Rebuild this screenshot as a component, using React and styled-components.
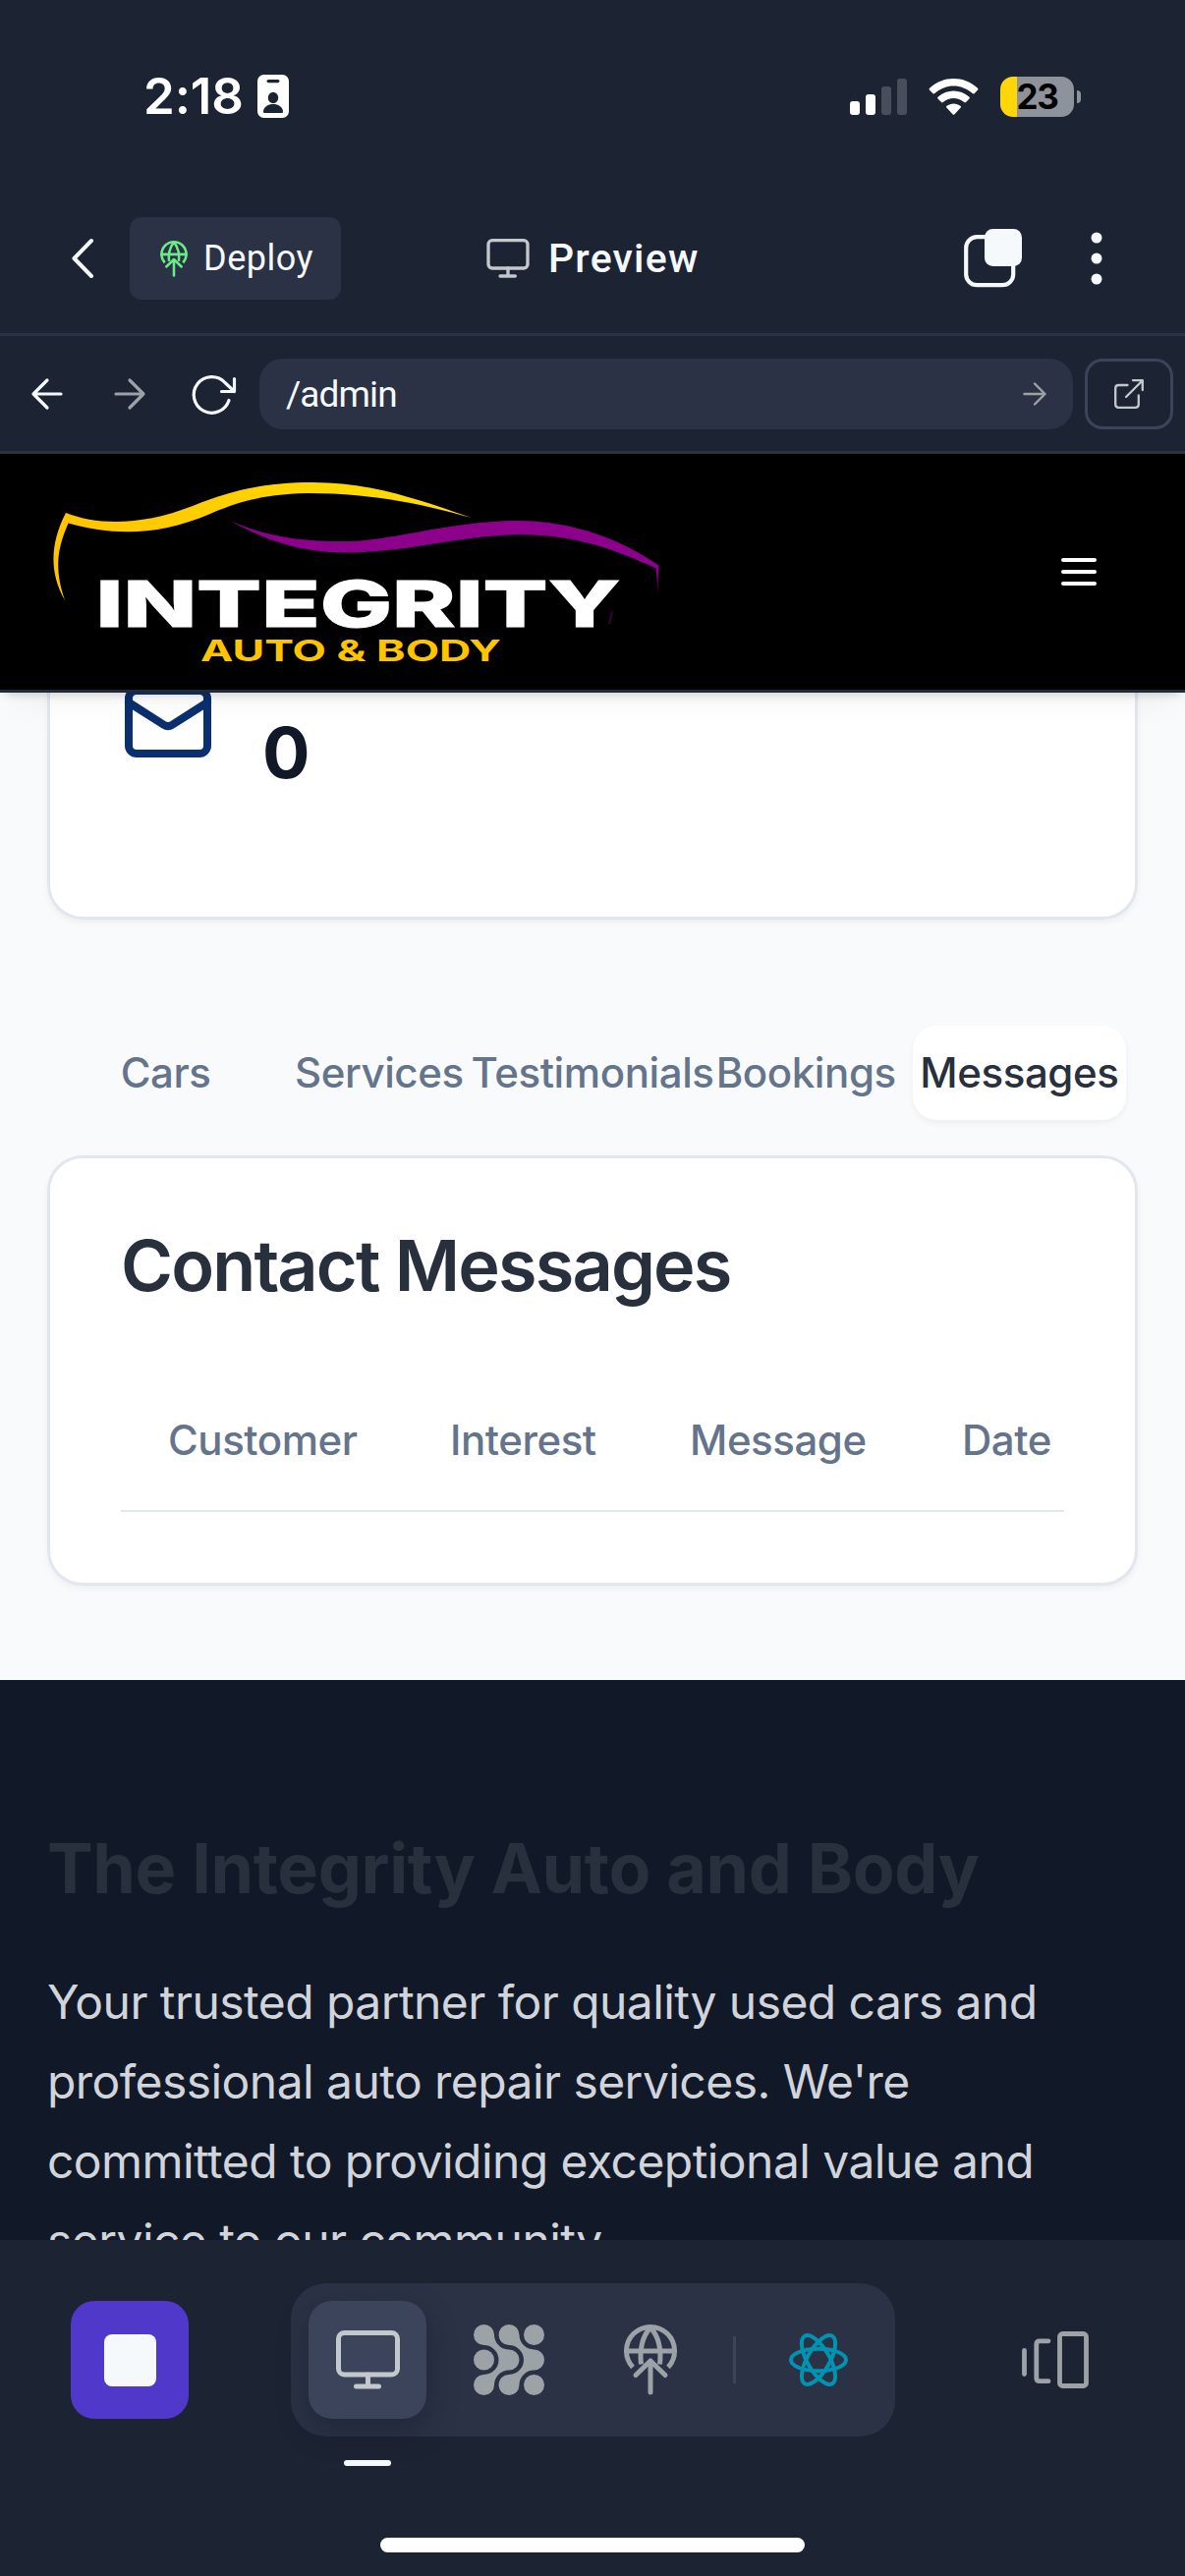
import React from "react";
import styled, { createGlobalStyle } from "styled-components";

const GlobalStyle = createGlobalStyle`
  *, *::before, *::after { box-sizing: border-box; }
  body { margin: 0; background: #1c2333; }
  button { border: 0; padding: 0; background: none; color: inherit; font: inherit; }
  h2, p { margin: 0; }
  svg { display: block; flex: none; overflow: visible; }
`;

const ui = `Inter, "Liberation Sans", sans-serif`;

const Screen = styled.div`
  width: 1206px;
  height: 2622px;
  display: flex;
  flex-direction: column;
  overflow: hidden;
  background: #1c2333;
  color: #f5f9fc;
  font-family: ${ui};
`;

/* Status bar */
const StatusBar = styled.div`
  height: 184px;
  padding: 12px 106px 0 146px;
  display: flex;
  align-items: center;
  color: #fff;
`;
const Clock = styled.span`
  width: 116px;
  font-size: 51px;
  font-weight: 600;
  line-height: 60px;
  letter-spacing: -0.1px;
  white-space: nowrap;
`;
const StatusIcons = styled.div`
  margin-left: auto;
  display: flex;
  align-items: center;
  gap: 22px;
`;
const Battery = styled.div`
  display: flex;
  align-items: center;
  gap: 3px;
`;
const BatteryBody = styled.div`
  width: 75px;
  height: 41px;
  border-radius: 13px;
  display: flex;
  align-items: center;
  justify-content: center;
  background: linear-gradient(90deg, #ffd60a 0 17px, #8e929b 17px);
  color: #000;
  font-size: 35px;
  font-weight: 700;
  letter-spacing: -1.4px;
`;
const BatteryNub = styled.i`
  width: 4px;
  height: 13px;
  border-radius: 0 4px 4px 0;
  background: #8e929b;
`;

/* App header */
const TopBar = styled.header`
  height: 158px;
  padding: 3px 84px 0 73px;
  display: grid;
  grid-template-columns: 59px 363px 1fr auto auto;
  align-items: center;
  border-bottom: 3px solid #2b3245;
`;
const DeployButton = styled.button`
  width: 215px;
  height: 84px;
  padding-left: 31px;
  border-radius: 12px;
  display: flex;
  align-items: center;
  gap: 16px;
  background: #2b3245;
  font-family: Roboto, "Noto Sans", sans-serif;
  font-size: 36px;
  letter-spacing: 0.5px;
`;
const TabTitle = styled.div`
  display: flex;
  align-items: center;
  gap: 19px;
  font-family: Roboto, "Noto Sans", sans-serif;
  font-size: 41px;
  font-weight: 500;
  letter-spacing: 1.2px;
`;
const IconButton = styled.button`
  display: flex;
  align-items: center;
  justify-content: center;
  width: ${(p) => p.$w || 60}px;
  margin-left: ${(p) => p.$ml || 0}px;
`;

/* Address bar */
const AddressBar = styled.div`
  height: 120px;
  padding: 1px 12px 0 32px;
  display: flex;
  align-items: center;
  border-bottom: 3px solid #2b3245;
`;
const NavButtons = styled.div`
  width: 232px;
  display: flex;
  align-items: center;
`;
const NavButton = styled(IconButton)`
  width: auto;
  margin-right: ${(p) => p.$mr || 0}px;
`;
const UrlField = styled.div`
  flex: 1;
  height: 72px;
  padding: 0 27px;
  border-radius: 24px;
  display: flex;
  align-items: center;
  justify-content: space-between;
  background: #2b3245;
  font-family: Roboto, "Noto Sans", sans-serif;
  font-size: 37px;
  letter-spacing: -0.9px;
`;
const OpenButton = styled.button`
  width: 90px;
  height: 72px;
  margin-left: 12px;
  border: 3px solid #3c445c;
  border-radius: 18px;
  display: flex;
  align-items: center;
  justify-content: center;
`;

/* Previewed website */
const Viewport = styled.main`
  height: 1818px;
  overflow: hidden;
  background: #f9fafc;
  color: #29303d;
`;
const SiteHeader = styled.header`
  position: relative;
  z-index: 1;
  height: 243px;
  padding: 24px 90px 24px 50px;
  display: flex;
  align-items: center;
  justify-content: space-between;
  background: #000;
  border-bottom: 3px solid #1f2937;
  box-shadow: 0 24px 30px -12px rgba(0, 0, 0, 0.04), 0 6px 10px -5px rgba(0, 0, 0, 0.2);
`;
const Content = styled.div`
  height: 1005px;
  padding: 0 48px;
`;
const Card = styled.section`
  background: #fff;
  border: 3px solid #e2e6ef;
  border-radius: 36px;
  box-shadow: 0 3px 6px rgba(0, 0, 0, 0.05);
`;
const StatCard = styled(Card)`
  height: 231px;
  padding: 0 72px;
  display: flex;
  align-items: flex-start;
  gap: 48px;
  border-top: 0;
  border-top-left-radius: 0;
  border-top-right-radius: 0;
`;
const MailIcon = styled.svg`
  margin-top: -18px;
`;
const StatValue = styled.strong`
  margin-top: 13px;
  font-size: 72px;
  font-weight: 700;
  line-height: 96px;
  color: #111827;
`;
const Tabs = styled.nav`
  margin-top: 96px;
  padding: 12px;
  height: 120px;
  display: grid;
  grid-template-columns: repeat(5, 1fr);
`;
const Tab = styled.button`
  min-width: 0;
  padding-bottom: 2px;
  border-radius: 24px;
  display: flex;
  align-items: center;
  justify-content: center;
  white-space: nowrap;
  font-size: 42px;
  font-weight: 500;
  letter-spacing: -0.4px;
  color: ${(p) => (p.$active ? "#29303d" : "#64748b")};
  background: ${(p) => (p.$active ? "#fff" : "transparent")};
  box-shadow: ${(p) => (p.$active ? "0 3px 6px rgba(0,0,0,.05)" : "none")};
`;
const MessagesCard = styled(Card)`
  height: 438px;
  margin-top: 24px;
  padding: 67px 72px 0;
`;
const CardTitle = styled.h2`
  font-size: 72px;
  line-height: 84px;
  font-weight: 600;
  letter-spacing: -1.85px;
`;
const TableHead = styled.div`
  margin-top: 66px;
  height: 143px;
  display: grid;
  grid-template-columns: 287px 244px 277px 1fr;
  align-items: center;
  padding: 0 0 2px 48px;
  border-bottom: 2px solid #e2e6ef;
  font-size: 42px;
  font-weight: 500;
  letter-spacing: -0.45px;
  color: #64748b;
`;
const SiteFooter = styled.footer`
  height: 570px;
  padding: 144px 48px 0;
  background: #111827;
`;
const FooterTitle = styled.h2`
  font-size: 70px;
  line-height: 96px;
  font-weight: 700;
  letter-spacing: -0.35px;
  color: #29303d;
  white-space: nowrap;
`;
const FooterText = styled.p`
  margin-top: 47px;
  font-size: 48px;
  line-height: 81px;
  letter-spacing: -0.56px;
  color: #d1d5db;
  white-space: nowrap;
`;

/* Bottom dock */
const Dock = styled.footer`
  height: 342px;
  display: flex;
  flex-direction: column;
  align-items: center;
  background: #1c2333;
`;
const DockRow = styled.div`
  width: 100%;
  height: 200px;
  padding: 44px 98px 0 72px;
  display: flex;
  align-items: center;
`;
const StopButton = styled.button`
  width: 120px;
  height: 120px;
  border-radius: 24px;
  display: flex;
  align-items: center;
  justify-content: center;
  background: #5039ca;
`;
const StopGlyph = styled.i`
  width: 53px;
  height: 53px;
  border-radius: 8px;
  background: #f5f9fc;
`;
const ToolGroup = styled.div`
  height: 156px;
  width: 615px;
  margin-left: 104px;
  padding: 0 18px;
  border-radius: 36px;
  display: flex;
  align-items: center;
  gap: 24px;
  background: #2b3245;
`;
const ToolButton = styled.button`
  width: 120px;
  height: 120px;
  border-radius: 24px;
  display: flex;
  align-items: center;
  justify-content: center;
  color: #9da2a6;
  background: ${(p) => (p.$active ? "#3c445c" : "transparent")};
  box-shadow: ${(p) => (p.$active ? "0 12px 30px rgba(14,21,37,.35)" : "none")};
`;
const Divider = styled.i`
  width: 3px;
  height: 48px;
  background: #3c445c;
`;
const Indicator = styled.i`
  align-self: flex-start;
  width: 48px;
  height: 6px;
  margin: 24px 0 0 350px;
  border-radius: 3px;
  background: #f5f9fc;
`;
const HomeBar = styled.i`
  width: 432px;
  height: 15px;
  margin-top: 73px;
  border-radius: 8px;
  background: #fff;
`;

const line = { fill: "none", strokeLinecap: "round", strokeLinejoin: "round" };

const BadgeIcon = () => (
  <svg width="32" height="44" viewBox="0 0 32 44">
    <rect width="32" height="44" rx="6.5" fill="#fff" />
    <rect x="9.5" y="5" width="13" height="3.2" rx="1.6" fill="#1c2333" />
    <ellipse cx="16" cy="23.5" rx="5.2" ry="5.8" fill="#1c2333" />
    <path d="M6 37.5C6.500 27.500 25.500 27.500 26 37.500C26 38.700 25.500 39 24.500 39H7.500C6.500 39 6 38.700 6 37.500Z" fill="#1c2333" />
  </svg>
);

const SignalIcon = () => (
  <svg width="58" height="37" viewBox="0 0 58 37">
    <rect y="23" width="10" height="14" rx="3" fill="#fff" />
    <rect x="16" y="16" width="10" height="21" rx="3" fill="#fff" />
    <rect x="32" y="8" width="10" height="29" rx="3" fill="#494e5c" />
    <rect x="48" width="10" height="37" rx="3" fill="#494e5c" />
  </svg>
);

const WifiIcon = () => (
  <svg width="51" height="37" viewBox="0 0 51 37" fill="#fff">
    <path d="M1 9.700C15-3.200 36-3.200 50 9.700Q51 10.700 50 11.700L46.500 15.200Q45.700 16 44.700 15.100C33 4.900 18 4.900 6.300 15.100Q5.300 16 4.500 15.200L1 11.700Q0 10.700 1 9.700Z" />
    <path d="M9.500 18.700C19 10.300 32 10.300 41.500 18.700Q42.400 19.600 41.500 20.500L38 24Q37.200 24.800 36.200 24C29.500 18.500 21.500 18.500 14.800 24Q13.800 24.800 13 24L9.500 20.500Q8.600 19.600 9.500 18.700Z" />
    <path d="M18.300 28C22.500 24.600 28.500 24.600 32.700 28Q33.500 28.800 32.700 29.600L26.500 36.300Q25.500 37.300 24.500 36.300L18.300 29.600Q17.500 28.800 18.300 28Z" />
  </svg>
);

const MonitorIcon = ({ width = 65, height = 60 }) => (
  <svg width={width} height={height} viewBox="0 0 65 60" stroke="#c2c8cc" strokeWidth="5" {...line}>
    <rect x="2.500" y="2.500" width="60" height="42.500" rx="6" />
    <path d="M32.500 45V57M20.500 57H43.500" />
  </svg>
);

const GlobeUpIcon = ({ width = 54, height = 72, color = "#9da2a6" }) => (
  <svg width={width} height={height} viewBox="0 0 54 72" stroke={color} strokeWidth="5" {...line}>
    <path d="M9 43.500A24.500 24.500 0 1 1 45 43.500" strokeLinecap="butt" />
    <path d="M2.500 27H51.500" />
    <path d="M17.500 40.500C16 27 18 13 27 3C36 13 38 27 36.500 40.500" strokeLinecap="butt" />
    <path d="M27 69V37M12 51.500L27 37L42 51.500" />
  </svg>
);

const WindowsIcon = () => (
  <svg width="60" height="60" viewBox="0 0 60 60">
    <rect x="2.200" y="8.200" width="48" height="49" rx="11" fill="none" stroke="#f5f9fc" strokeWidth="4.200" />
    <rect x="21" y="0" width="38" height="38" rx="8.500" fill="#f5f9fc" />
  </svg>
);

const DotsIcon = () => (
  <svg width="12" height="54" viewBox="0 0 12 54" fill="#f5f9fc">
    <circle cx="6" cy="6" r="5.500" />
    <circle cx="6" cy="27" r="5.500" />
    <circle cx="6" cy="48" r="5.500" />
  </svg>
);

const ArrowIcon = ({ color, left, size = 32, weight = 3.2 }) => (
  <svg
    width={size}
    height={size}
    viewBox="0 0 32 32"
    stroke={color}
    strokeWidth={weight}
    transform={left ? "rotate(180)" : undefined}
    {...line}
  >
    <path d="M2 16H30M16 2L30 16L16 30" />
  </svg>
);

const RefreshIcon = () => (
  <svg width="45" height="41" viewBox="0 0 45 41" stroke="#f5f9fc" strokeWidth="3.200" {...line}>
    <path d="M38 26.500A18.300 18.300 0 1 1 34 8.500L43.500 17.500M43.500 4.500V17.500H30.500" />
  </svg>
);

const ExternalIcon = () => (
  <svg width="30" height="30" viewBox="0 0 30 30" stroke="#c2c8cc" strokeWidth="2.300" {...line}>
    <path d="M13.500 6H4.500Q1.200 6 1.200 9.300V25.500Q1.200 28.800 4.500 28.800H21.500Q24.800 28.800 24.800 25.500V16.500" />
    <path d="M12 18L28.800 1.200M19 1.200H28.800V11" />
  </svg>
);

const SiteLogo = () => (
  <svg width="640" height="192" viewBox="0 0 640 192" role="img" aria-label="Integrity Auto &amp; Body">
    <defs>
      <linearGradient id="gold" x1="0" x2="1">
        <stop offset="0" stopColor="#ffc400" />
        <stop offset="1" stopColor="#ffe000" />
      </linearGradient>
      <linearGradient id="tail" x1="0" y1="0" x2="0" y2="1">
        <stop offset="0.650" stopColor="#8c008c" />
        <stop offset="1" stopColor="#8c008c" stopOpacity="0.200" />
      </linearGradient>
    </defs>
    <path
      fill="url(#gold)"
      d="M17 36C50 49 95 49 146 29C188 12 222 5 269 5C330 5 380 24 430 41C385 29 335 16 263 16C215 17 190 26 164 37C110 60 65 59 19.600 46.500C7 75 6 95 16 125C-1 95 2 65 17 36Z"
    />
    <path
      fill="url(#tail)"
      d="M184 44C220 60 258 66 307 65C360 62 410 44 477 44C535 44 585 65 620.500 89.500L619.600 120L617.500 92.500C575 73 535 58.500 481 58.300C420 58 370 76 300 76.500C250 76 215 61 184 44Z"
    />
    <path d="M573 136L570 149" stroke="#3a003a" strokeWidth="2" />
    <text
      x="47.500"
      y="151.500"
      fill="#fff"
      stroke="#fff"
      strokeWidth="1"
      fontFamily={ui}
      fontSize="65"
      fontWeight="800"
      textLength="534"
      lengthAdjust="spacingAndGlyphs"
    >
      INTEGRITY
    </text>
    <text x="154" y="187" fill="#ffc400" fontFamily={ui} fontSize="30" fontWeight="700" textLength="306" lengthAdjust="spacingAndGlyphs">
      AUTO &amp; BODY
    </text>
  </svg>
);

const MenuIcon = () => (
  <svg width="36" height="28" viewBox="0 0 36 28" stroke="#fff" strokeWidth="4" {...line}>
    <path d="M2 2H34M2 14H34M2 26H34" />
  </svg>
);

const GridIcon = () => {
  const chevron =
    "M10.500 0A10.500 10.500 0 0 1 21 10.500A15 15 0 0 0 36 25.500A10.500 10.500 0 0 1 36 46.500A15 15 0 0 0 21 61.500A10.500 10.500 0 1 1 10.500 51A15 15 0 0 0 10.500 21A10.500 10.500 0 0 1 10.500 0Z";
  return (
    <svg width="72" height="72" viewBox="0 0 72 72" fill="#9da2a6">
      <path d={chevron} />
      <path d={chevron} transform="translate(25.500 0)" />
      <circle cx="10.500" cy="36" r="10.500" />
      <circle cx="61.500" cy="10.500" r="10.500" />
      <circle cx="61.500" cy="61.500" r="10.500" />
    </svg>
  );
};

const ReactIcon = () => (
  <svg width="60" height="54" viewBox="0 0 60 54" fill="none" stroke="#0093b2" strokeWidth="4">
    {[0, 60, 120].map((angle) => (
      <ellipse key={angle} cx="30" cy="27" rx="28" ry="11.300" transform={`rotate(${angle} 30 27)`} />
    ))}
  </svg>
);

const SwitcherIcon = () => (
  <svg width="68" height="58" viewBox="0 0 68 58" stroke="#9da2a6" strokeWidth="4.800" {...line}>
    <path d="M2.500 19.500V43.500M27 9.800H18Q14.800 9.800 14.800 13V47.500Q14.800 50.700 18 50.700H27" />
    <rect x="38.500" y="2.500" width="27" height="53" rx="3" />
  </svg>
);

const TABS = ["Cars", "Services", "Testimonials", "Bookings", "Messages"];
const COLUMNS = ["Customer", "Interest", "Message", "Date"];

export default function App() {
  return (
    <Screen>
      <GlobalStyle />
      <StatusBar>
        <Clock>2:18</Clock>
        <BadgeIcon />
        <StatusIcons>
          <SignalIcon />
          <WifiIcon />
          <Battery>
            <BatteryBody>23</BatteryBody>
            <BatteryNub />
          </Battery>
        </StatusIcons>
      </StatusBar>

      <TopBar>
        <svg width="22" height="40" viewBox="0 0 22 40" stroke="#f5f9fc" strokeWidth="4" {...line}>
          <path d="M20 2L2.500 20L20 38" />
        </svg>
        <DeployButton>
          <GlobeUpIcon width={28} height={37} color="#6cea87" />
          Deploy
        </DeployButton>
        <TabTitle>
          <MonitorIcon width={44} height={40} />
          Preview
        </TabTitle>
        <IconButton>
          <WindowsIcon />
        </IconButton>
        <IconButton $w={12} $ml={69}>
          <DotsIcon />
        </IconButton>
      </TopBar>

      <AddressBar>
        <NavButtons>
          <NavButton $mr={52}>
            <ArrowIcon color="#f5f9fc" left />
          </NavButton>
          <NavButton $mr={47}>
            <ArrowIcon color="#9da2a6" />
          </NavButton>
          <NavButton>
            <RefreshIcon />
          </NavButton>
        </NavButtons>
        <UrlField>
          /admin
          <ArrowIcon color="#9da2a6" size={24} />
        </UrlField>
        <OpenButton>
          <ExternalIcon />
        </OpenButton>
      </AddressBar>

      <Viewport>
        <SiteHeader>
          <SiteLogo />
          <MenuIcon />
        </SiteHeader>
        <Content>
          <StatCard>
            <MailIcon width="96" height="96" viewBox="0 0 24 24" stroke="#0a3070" strokeWidth="2" {...line}>
              <rect x="2" y="4" width="20" height="16" rx="2" />
              <path d="m22 7-8.970 5.700a1.940 1.940 0 0 1-2.060 0L2 7" />
            </MailIcon>
            <StatValue>0</StatValue>
          </StatCard>
          <Tabs>
            {TABS.map((label) => (
              <Tab key={label} $active={label === "Messages"}>
                {label}
              </Tab>
            ))}
          </Tabs>
          <MessagesCard>
            <CardTitle>Contact Messages</CardTitle>
            <TableHead>
              {COLUMNS.map((label) => (
                <span key={label}>{label}</span>
              ))}
            </TableHead>
          </MessagesCard>
        </Content>
        <SiteFooter>
          <FooterTitle>The Integrity Auto and Body</FooterTitle>
          <FooterText>
            Your trusted partner for quality used cars and
            <br />
            professional auto repair services. We're
            <br />
            committed to providing exceptional value and
            <br />
            service to our community.
          </FooterText>
        </SiteFooter>
      </Viewport>

      <Dock>
        <DockRow>
          <StopButton>
            <StopGlyph />
          </StopButton>
          <ToolGroup>
            <ToolButton $active>
              <MonitorIcon />
            </ToolButton>
            <ToolButton>
              <GridIcon />
            </ToolButton>
            <ToolButton>
              <GlobeUpIcon />
            </ToolButton>
            <Divider />
            <ToolButton>
              <ReactIcon />
            </ToolButton>
          </ToolGroup>
          <IconButton $w={68} $ml={129}>
            <SwitcherIcon />
          </IconButton>
        </DockRow>
        <Indicator />
        <HomeBar />
      </Dock>
    </Screen>
  );
}
